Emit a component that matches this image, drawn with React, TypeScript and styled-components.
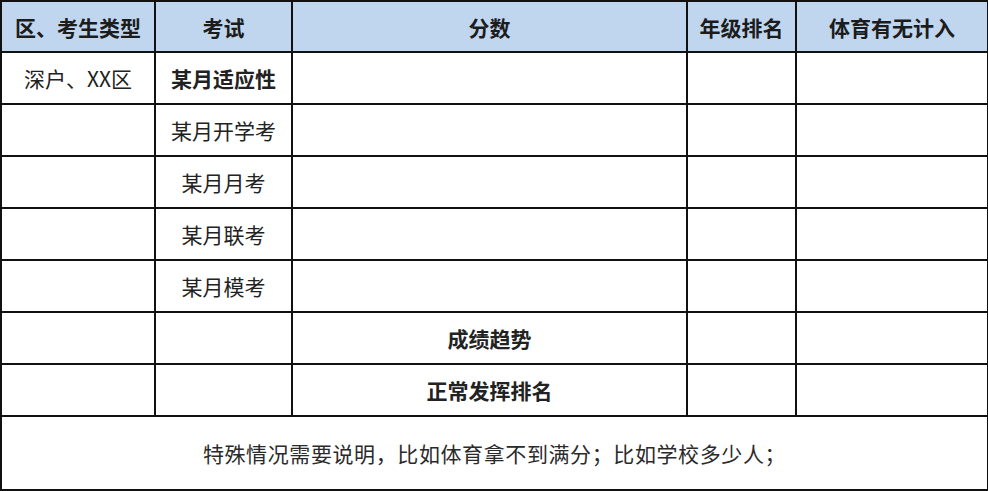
import React from "react";
import styled, { createGlobalStyle } from "styled-components";

const GlobalStyle = createGlobalStyle`
  html, body {
    margin: 0;
    padding: 0;
    background: #ffffff;
  }
  body {
    font-family: "Noto Sans CJK SC", "Noto Sans", sans-serif;
    color: #1a1a1a;
  }
`;

const Table = styled.table`
  width: 987px;
  border-collapse: collapse;
  table-layout: fixed;
  margin: 0;
`;

const Col = styled.col<{ $w: number }>`
  width: ${(p) => p.$w}px;
`;

const HeadCell = styled.th`
  height: 49px;
  padding: 0;
  background: #bfd6ee;
  border: 2px solid #111;
  font-size: 21px;
  font-weight: 700;
  color: #1c1c1c;
  text-align: center;
  vertical-align: middle;
  white-space: nowrap;
`;

const Cell = styled.td<{ $bold?: boolean }>`
  height: 50px;
  padding: 0;
  border: 2px solid #111;
  font-size: 21px;
  font-weight: ${(p) => (p.$bold ? 700 : 400)};
  color: #222;
  text-align: center;
  vertical-align: middle;
  white-space: nowrap;
`;

const NoteCell = styled.td`
  height: 72px;
  padding: 0;
  border: 2px solid #111;
  font-size: 21px;
  letter-spacing: 0.6px;
  color: #2a2a2a;
  text-align: center;
  vertical-align: middle;
  white-space: nowrap;
`;

const headers = ["区、考生类型", "考试", "分数", "年级排名", "体育有无计入"];

type Row = { region?: string; exam?: string; examBold?: boolean; score?: string };

const rows: Row[] = [
  { region: "深户、XX区", exam: "某月适应性", examBold: true },
  { exam: "某月开学考" },
  { exam: "某月月考" },
  { exam: "某月联考" },
  { exam: "某月模考" },
  { score: "成绩趋势" },
  { score: "正常发挥排名" },
];

export default function App() {
  return (
    <>
      <GlobalStyle />
      <Table>
        <colgroup>
          <Col $w={154} />
          <Col $w={137} />
          <Col $w={395} />
          <Col $w={109} />
          <Col $w={192} />
        </colgroup>
        <thead>
          <tr>
            {headers.map((h) => (
              <HeadCell key={h}>{h}</HeadCell>
            ))}
          </tr>
        </thead>
        <tbody>
          {rows.map((r, i) => (
            <tr key={i}>
              <Cell>{r.region}</Cell>
              <Cell $bold={r.examBold}>{r.exam}</Cell>
              <Cell $bold>{r.score}</Cell>
              <Cell />
              <Cell />
            </tr>
          ))}
          <tr>
            <NoteCell colSpan={5}>
              特殊情况需要说明，比如体育拿不到满分；比如学校多少人；
            </NoteCell>
          </tr>
        </tbody>
      </Table>
    </>
  );
}
